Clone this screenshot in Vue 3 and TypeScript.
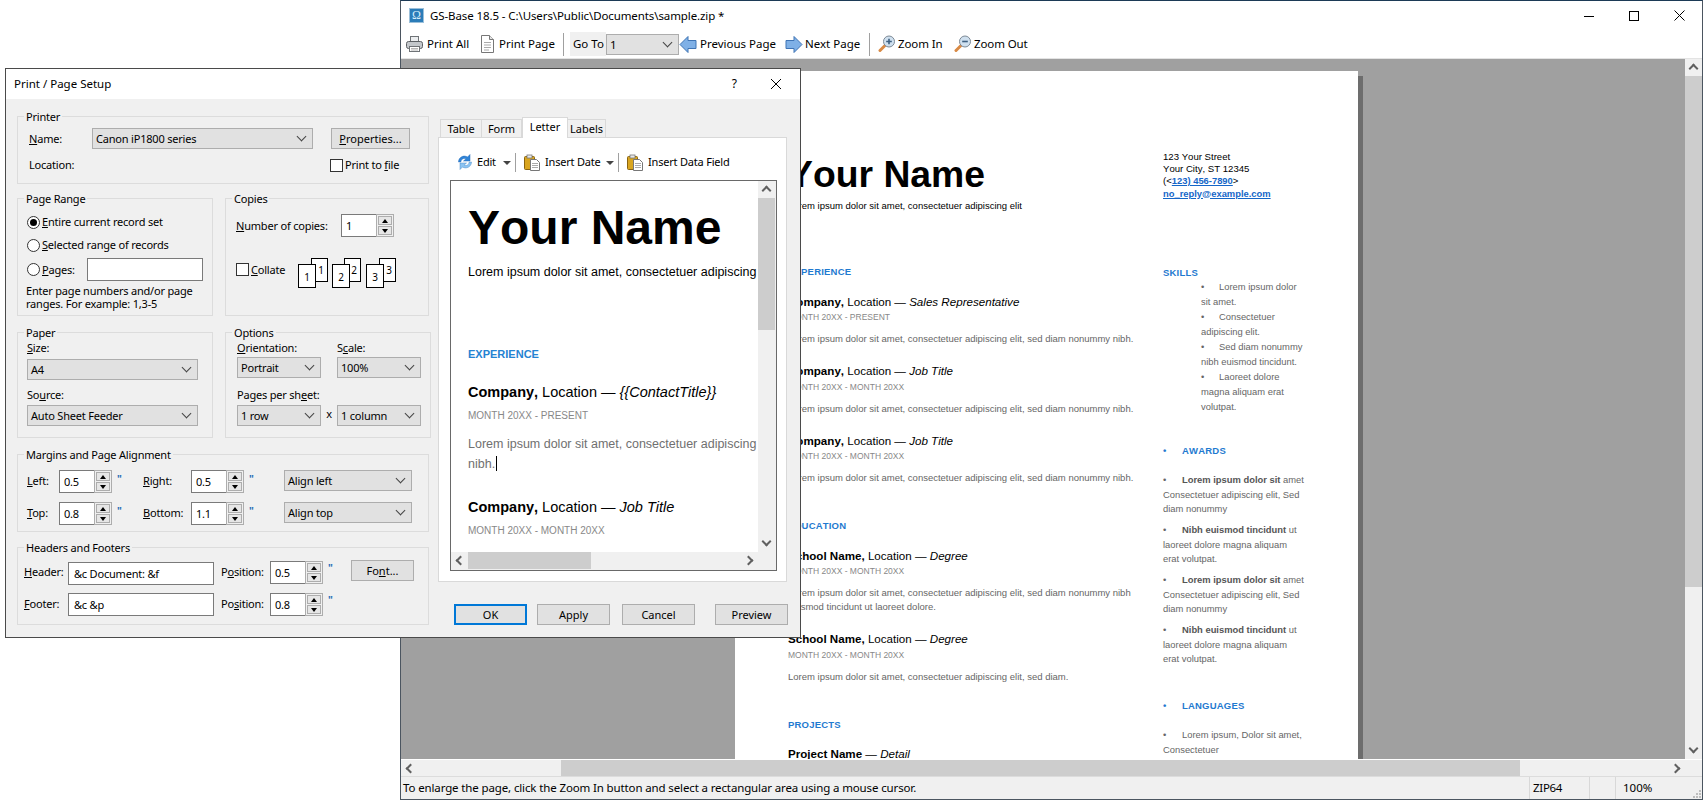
<script setup lang="ts">
interface Entry {
  name: string
  place: string
  role: string
  date: string
  body: string[]
}

const lorem = 'Lorem ipsum dolor sit amet, consectetuer adipiscing elit, sed diam nonummy nibh.'
const contactField = '{' + '{ContactTitle}' + '}'

const experience: Entry[] = [
  { name: 'Company,', place: 'Location —', role: 'Sales Representative', date: 'MONTH 20XX - PRESENT', body: [lorem] },
  { name: 'Company,', place: 'Location —', role: 'Job Title', date: 'MONTH 20XX - MONTH 20XX', body: [lorem] },
  { name: 'Company,', place: 'Location —', role: 'Job Title', date: 'MONTH 20XX - MONTH 20XX', body: [lorem] },
]

const education: Entry[] = [
  {
    name: 'School Name,',
    place: 'Location —',
    role: 'Degree',
    date: 'MONTH 20XX - MONTH 20XX',
    body: ['Lorem ipsum dolor sit amet, consectetuer adipiscing elit, sed diam nonummy nibh', 'euismod tincidunt ut laoreet dolore.'],
  },
  {
    name: 'School Name,',
    place: 'Location —',
    role: 'Degree',
    date: 'MONTH 20XX - MONTH 20XX',
    body: ['Lorem ipsum dolor sit amet, consectetuer adipiscing elit, sed diam.'],
  },
]

const skills = [
  ['Lorem ipsum dolor', 'sit amet.'],
  ['Consectetuer', 'adipiscing elit.'],
  ['Sed diam nonummy', 'nibh euismod tincidunt.'],
  ['Laoreet dolore', 'magna aliquam erat', 'volutpat.'],
]

const awards = [
  { bold: 'Lorem ipsum dolor sit', rest: 'amet', lines: ['Consectetuer adipiscing elit, Sed', 'diam nonummy'] },
  { bold: 'Nibh euismod tincidunt', rest: 'ut', lines: ['laoreet dolore magna aliquam', 'erat volutpat.'] },
  { bold: 'Lorem ipsum dolor sit', rest: 'amet', lines: ['Consectetuer adipiscing elit, Sed', 'diam nonummy'] },
  { bold: 'Nibh euismod tincidunt', rest: 'ut', lines: ['laoreet dolore magna aliquam', 'erat volutpat.'] },
]

const collatePages = [
  { x: 13, n: 1, fx: 0 },
  { x: 46, n: 2, fx: 34 },
  { x: 81, n: 3, fx: 68 },
]
</script>

<template>
  <div class="desktop">
    <!-- main preview window -->
    <div class="window">
      <div class="titlebar">
        <span class="app-icon">Ω</span>
        <span class="title-text">GS-Base 18.5 - C:\Users\Public\Documents\sample.zip *</span>
        <span class="win-btns">
          <svg width="10" height="10" viewBox="0 0 10 10"><path d="M0 5.5h10" stroke="#000" fill="none" /></svg>
          <svg width="10" height="10" viewBox="0 0 10 10"><rect x=".5" y=".5" width="9" height="9" stroke="#000" fill="none" /></svg>
          <svg width="11" height="11" viewBox="0 0 11 11"><path d="M.5.5l10 10M10.5.5l-10 10" stroke="#000" fill="none" /></svg>
        </span>
      </div>

      <div class="toolbar">
        <div class="tool tool-print-all">
          <svg width="17" height="17" viewBox="0 0 17 17">
            <rect x="4.5" y=".5" width="8" height="6" fill="#eceef0" stroke="#6f7377" />
            <rect x=".5" y="5.5" width="16" height="7" rx="2" fill="#c3c7cb" stroke="#5c6064" />
            <rect x="3.5" y="10.5" width="10" height="5" fill="#fff" stroke="#6f7377" />
            <path d="M5 12.5h7M5 14h7" stroke="#b5b5b5" />
          </svg>
          <span>Print All</span>
        </div>
        <div class="tool tool-print-page">
          <svg width="15" height="18" viewBox="0 0 15 18">
            <path d="M1.5.5h8l4 4v13h-12z" fill="#fff" stroke="#777" />
            <path d="M9.5.5v4h4" fill="#e4e4e4" stroke="#777" />
            <path d="M4 7.5h7M4 10h7M4 12.5h7M4 15h5" stroke="#aaa" />
          </svg>
          <span>Print Page</span>
        </div>
        <i class="tool-sep"></i>
        <div class="goto">Go To</div>
        <div class="select goto-select">1</div>
        <div class="tool tool-prev">
          <svg width="18" height="19" viewBox="0 0 18 19">
            <path d="M1 9.5L9 1.5v4h8v8H9v4z" fill="#7fb0e6" stroke="#3f74b5" />
          </svg>
          <span>Previous Page</span>
        </div>
        <div class="tool tool-next">
          <svg width="18" height="19" viewBox="0 0 18 19">
            <path d="M17 9.5L9 1.5v4H1v8h8v4z" fill="#7fb0e6" stroke="#3f74b5" />
          </svg>
          <span>Next Page</span>
        </div>
        <i class="tool-sep"></i>
        <div class="tool tool-zoom tool-zoomin">
          <svg width="18" height="18" viewBox="0 0 18 18">
            <path d="M7.5 10L2 15.5" stroke="#d98a45" stroke-width="3" stroke-linecap="round" />
            <circle cx="11" cy="6.5" r="5.5" fill="#cfe0ef" stroke="#7d8a96" />
            <path d="M8.2 6.5h5.600M11 3.700v5.600" stroke="#3d5f80" stroke-width="1.6" />
          </svg>
          <span>Zoom In</span>
        </div>
        <div class="tool tool-zoom">
          <svg width="18" height="18" viewBox="0 0 18 18">
            <path d="M7.5 10L2 15.5" stroke="#d98a45" stroke-width="3" stroke-linecap="round" />
            <circle cx="11" cy="6.5" r="5.5" fill="#cfe0ef" stroke="#7d8a96" />
            <path d="M8.2 6.5h5.600" stroke="#3d5f80" stroke-width="1.6" />
          </svg>
          <span>Zoom Out</span>
        </div>
      </div>

      <div class="workspace">
        <div class="canvas">
          <div class="page">
            <div class="page-main">
              <div class="cv-name">Your Name</div>
              <div class="cv-tag">Lorem ipsum dolor sit amet, consectetuer adipiscing elit</div>

              <div class="cv-section cv-first">EXPERIENCE</div>
              <div v-for="(e, i) in experience" :key="i" class="cv-entry">
                <div class="cv-head"><b>{{ e.name }}</b> {{ e.place }} <em>{{ e.role }}</em></div>
                <div class="cv-date">{{ e.date }}</div>
                <div class="cv-body">
                  <div v-for="line in e.body" :key="line">{{ line }}</div>
                </div>
              </div>

              <div class="cv-section">EDUCATION</div>
              <div v-for="(e, i) in education" :key="i" class="cv-entry">
                <div class="cv-head"><b>{{ e.name }}</b> {{ e.place }} <em>{{ e.role }}</em></div>
                <div class="cv-date">{{ e.date }}</div>
                <div class="cv-body">
                  <div v-for="line in e.body" :key="line">{{ line }}</div>
                </div>
              </div>

              <div class="cv-section">PROJECTS</div>
              <div class="cv-entry">
                <div class="cv-head"><b>Project Name</b> — <em>Detail</em></div>
              </div>
            </div>

            <div class="page-side">
              <div class="cv-contact">
                <div>123 Your Street</div>
                <div>Your City, ST 12345</div>
                <div>(&lt;<a>123) 456-7890</a>&gt;</div>
                <div class="cv-mail"><a>no_reply@example.com</a></div>
              </div>

              <div class="cv-section cv-skills">SKILLS</div>
              <div class="skill-list">
                <div v-for="(s, i) in skills" :key="i">
                  <div v-for="(line, j) in s" :key="line">
                    <span v-if="j === 0" class="bullet skill-bullet">•</span>{{ line }}
                  </div>
                </div>
              </div>

              <div class="cv-section cv-side-head"><span class="bullet side-bullet">•</span>AWARDS</div>
              <div class="award-list">
                <div v-for="(a, i) in awards" :key="i" class="award">
                  <div><span class="bullet side-bullet">•</span><b>{{ a.bold }}</b> {{ a.rest }}</div>
                  <div v-for="line in a.lines" :key="line">{{ line }}</div>
                </div>
              </div>

              <div class="cv-section cv-side-head cv-languages"><span class="bullet side-bullet">•</span>LANGUAGES</div>
              <div class="award-list">
                <div class="award">
                  <div><span class="bullet side-bullet">•</span>Lorem ipsum, Dolor sit amet,</div>
                  <div>Consectetuer</div>
                </div>
              </div>
            </div>
          </div>
        </div>
        <div class="vbar vbar-main">
          <span class="sb-btn"><i class="chev up"></i></span>
          <span class="vthumb vthumb-main"></span>
          <span class="sb-fill"></span>
          <span class="sb-btn"><i class="chev down"></i></span>
        </div>
      </div>

      <div class="hbar-row">
        <div class="hbar">
          <span class="sb-btn"><i class="chev left"></i></span>
          <span class="sb-gap"></span>
          <span class="hthumb-main"></span>
          <span class="sb-fill"></span>
          <span class="sb-btn"><i class="chev right"></i></span>
        </div>
        <span class="corner"></span>
      </div>

      <div class="statusbar">
        <span class="status-msg">To enlarge the page, click the Zoom In button and select a rectangular area using a mouse cursor.</span>
        <span class="status-cell cell-zip">ZIP64</span>
        <span class="status-cell cell-empty"></span>
        <span class="status-cell cell-zoom">100%</span>
        <svg class="grip" width="9" height="9" viewBox="0 0 9 9">
          <path d="M7 1h2v2H7zM4 4h2v2H4zM7 4h2v2H7zM1 7h2v2H1zM4 7h2v2H4zM7 7h2v2H7z" fill="#bdbdbd" />
        </svg>
      </div>
    </div>

    <!-- print setup dialog -->
    <div class="dialog">
      <div class="dlg-title">
        <span>Print / Page Setup</span>
        <span class="dlg-help">?</span>
        <svg class="dlg-close" width="12" height="12" viewBox="0 0 12 12"><path d="M1 1l10 10M11 1L1 11" stroke="#000" fill="none" /></svg>
      </div>

      <div class="dlg-body">
        <div class="dlg-left">
          <div class="group group-printer">
            <span class="legend">Printer</span>
            <div class="printer-row">
              <label class="printer-label"><u>N</u>ame:</label>
              <div class="select printer-select">Canon iP1800 series</div>
              <button class="btn btn-props"><u>P</u>roperties...</button>
            </div>
            <div class="printer-row location-row">
              <label class="location-label">Location:</label>
              <span class="check"></span>
              <span>Print to <u>f</u>ile</span>
            </div>
          </div>

          <div class="group-pair">
            <div class="group group-range">
              <span class="legend">Page Range</span>
              <div class="range-row"><span class="radio on"></span><span><u>E</u>ntire current record set</span></div>
              <div class="range-row"><span class="radio"></span><span><u>S</u>elected range of records</span></div>
              <div class="range-row pages-row">
                <span class="radio"></span><span><u>P</u>ages:</span>
                <span class="field pages-field"></span>
              </div>
              <p class="range-help">Enter page numbers and/or page<br />ranges. For example: 1,3-5</p>
            </div>

            <div class="group group-copies">
              <span class="legend">Copies</span>
              <div class="copies-row">
                <label class="copies-label"><u>N</u>umber of copies:</label>
                <div class="spin">
                  <span class="spin-field">1</span>
                  <span class="spin-btns"><i><b class="tri-up"></b></i><i><b class="tri-down"></b></i></span>
                </div>
              </div>
              <div class="collate-row">
                <span class="check"></span>
                <span class="collate-text"><u>C</u>ollate</span>
                <svg class="collate" width="98" height="30" viewBox="0 0 98 30">
                  <g v-for="p in collatePages" :key="p.n">
                    <rect :x="p.x + .5" y=".5" width="16" height="23" fill="#fff" stroke="#000" />
                    <text :x="p.x + 10" y="16" text-anchor="middle" class="collate-num">{{ p.n }}</text>
                    <rect :x="p.fx + .5" y="6.5" width="17" height="23" fill="#fff" stroke="#000" />
                    <text :x="p.fx + 9" y="23" text-anchor="middle" class="collate-num">{{ p.n }}</text>
                  </g>
                </svg>
              </div>
            </div>
          </div>

          <div class="group-pair pair-paper">
            <div class="group group-paper">
              <span class="legend">Paper</span>
              <label class="field-label"><u>S</u>ize:</label>
              <div class="select paper-select">A4</div>
              <label class="field-label source-label">So<u>u</u>rce:</label>
              <div class="select paper-select source-select">Auto Sheet Feeder</div>
            </div>
            <div class="group group-options">
              <span class="legend">Options</span>
              <div class="options-grid">
                <label class="field-label"><u>O</u>rientation:</label>
                <span></span>
                <label class="field-label">S<u>c</u>ale:</label>
                <div class="select">Portrait</div>
                <span></span>
                <div class="select">100%</div>
                <label class="field-label sheet-label">Pages per sh<u>e</u>et:</label>
                <span></span>
                <span></span>
                <div class="select">1 row</div>
                <span class="times">x</span>
                <div class="select">1 column</div>
              </div>
            </div>
          </div>

          <div class="group group-margins">
            <span class="legend">Margins and Page Alignment</span>
            <div class="margins-grid">
              <label><u>L</u>eft:</label>
              <div class="spin"><span class="spin-field">0.5</span><span class="spin-btns"><i><b class="tri-up"></b></i><i><b class="tri-down"></b></i></span></div>
              <span class="inch">"</span>
              <label><u>R</u>ight:</label>
              <div class="spin"><span class="spin-field">0.5</span><span class="spin-btns"><i><b class="tri-up"></b></i><i><b class="tri-down"></b></i></span></div>
              <span class="inch">"</span>
              <div class="select">Align left</div>

              <label><u>T</u>op:</label>
              <div class="spin"><span class="spin-field">0.8</span><span class="spin-btns"><i><b class="tri-up"></b></i><i><b class="tri-down"></b></i></span></div>
              <span class="inch">"</span>
              <label><u>B</u>ottom:</label>
              <div class="spin"><span class="spin-field">1.1</span><span class="spin-btns"><i><b class="tri-up"></b></i><i><b class="tri-down"></b></i></span></div>
              <span class="inch">"</span>
              <div class="select">Align top</div>
            </div>
          </div>

          <div class="group group-headers">
            <span class="legend">Headers and Footers</span>
            <div class="headers-grid">
              <label><u>H</u>eader:</label>
              <span class="field head-field">&amp;c Document: &amp;f</span>
              <label>P<u>o</u>sition:</label>
              <div class="spin"><span class="spin-field">0.5</span><span class="spin-btns"><i><b class="tri-up"></b></i><i><b class="tri-down"></b></i></span></div>
              <span class="inch">"</span>
              <button class="btn btn-font">Fo<u>n</u>t...</button>

              <label><u>F</u>ooter:</label>
              <span class="field">&amp;c &amp;p</span>
              <label>Po<u>s</u>ition:</label>
              <div class="spin"><span class="spin-field">0.8</span><span class="spin-btns"><i><b class="tri-up"></b></i><i><b class="tri-down"></b></i></span></div>
              <span class="inch">"</span>
              <span></span>
            </div>
          </div>
        </div>

        <div class="dlg-right">
          <div class="tabs">
            <span class="tab tab-table">Table</span>
            <span class="tab tab-form">Form</span>
            <span class="tab tab-letter">Letter</span>
            <span class="tab tab-labels">Labels</span>
          </div>
          <div class="panel">
            <div class="panel-tools">
              <svg class="pt-edit" width="16" height="16" viewBox="0 0 16 16">
                <path d="M1.5 8C1.5 3.5 6.5 .5 10.5 3L13 .5V7H6.5L9 4.800C6.500 3.800 4.200 5 3.800 8z" fill="#2f84d8" stroke="#2a6fb8" stroke-width=".5" />
                <path d="M14.5 8C14.5 12.5 9.5 15.5 5.5 13L3 15.500V9h6.500L7 11.200c2.500 1 4.800-.2 5.200-3.200z" fill="#8cc4f2" stroke="#4f8fcb" stroke-width=".5" />
              </svg>
              <span class="pt-text pt-edit-text">Edit</span>
              <b class="tb-drop"></b>
              <i class="pt-sep"></i>
              <svg class="pt-icon" width="17" height="17" viewBox="0 0 17 17">
                <rect x=".5" y="2.5" width="10" height="13" rx="1" fill="#d9a51f" stroke="#8a6410" />
                <rect x="3" y="1" width="5" height="3" fill="#e9e9e9" stroke="#777" stroke-width=".8" />
                <path d="M6.5 5.5h6l3 3v8h-9z" fill="#fff" stroke="#777" />
                <path d="M8 9.5h6M8 11.5h6M8 13.5h6" stroke="#aaa" />
              </svg>
              <span class="pt-text pt-date-text">Insert Date</span>
              <b class="tb-drop"></b>
              <i class="pt-sep"></i>
              <svg class="pt-icon" width="17" height="17" viewBox="0 0 17 17">
                <rect x=".5" y="2.5" width="10" height="13" rx="1" fill="#d9a51f" stroke="#8a6410" />
                <rect x="3" y="1" width="5" height="3" fill="#e9e9e9" stroke="#777" stroke-width=".8" />
                <path d="M6.5 5.5h6l3 3v8h-9z" fill="#fff" stroke="#777" />
                <path d="M8 9.5h6M8 11.5h6M8 13.5h6" stroke="#aaa" />
              </svg>
              <span class="pt-text">Insert Data Field</span>
            </div>

            <div class="editor">
              <div class="editor-view">
                <div class="ed-name">Your Name</div>
                <div class="ed-tag">Lorem ipsum dolor sit amet, consectetuer adipiscing elit</div>
                <div class="ed-section">EXPERIENCE</div>
                <div class="ed-head"><b>Company,</b> Location — <em>{{ contactField }}</em></div>
                <div class="ed-date">MONTH 20XX - PRESENT</div>
                <div class="ed-body">Lorem ipsum dolor sit amet, consectetuer adipiscing elit, sed diam nonummy</div>
                <div class="ed-line2">nibh.<span class="caret"></span></div>
                <div class="ed-head ed-head2"><b>Company,</b> Location — <em>Job Title</em></div>
                <div class="ed-date">MONTH 20XX - MONTH 20XX</div>
              </div>
              <div class="vbar">
                <span class="sb-btn"><i class="chev up"></i></span>
                <span class="vthumb vthumb-ed"></span>
                <span class="sb-fill"></span>
                <span class="sb-btn"><i class="chev down"></i></span>
              </div>
              <div class="hbar">
                <span class="sb-btn"><i class="chev left"></i></span>
                <span class="hthumb-ed"></span>
                <span class="sb-fill"></span>
                <span class="sb-btn"><i class="chev right"></i></span>
              </div>
              <span class="corner"></span>
            </div>
          </div>
          <div class="dlg-buttons">
            <button class="btn btn-ok">OK</button>
            <button class="btn btn-apply">Apply</button>
            <button class="btn btn-cancel">Cancel</button>
            <button class="btn btn-preview">Preview</button>
          </div>
        </div>
      </div>
    </div>
  </div>
</template>

<style>
html,
body {
  margin: 0;
  background: #fff;
  overflow: hidden;
}
</style>

<style scoped>
.desktop {
  position: relative;
  width: 1703px;
  height: 800px;
  overflow: hidden;
  background: #fff;
  color: #000;
  font-family: "Noto Sans", "Open Sans", sans-serif;
  font-size: 11.5px;
  line-height: 16px;
}

/* ---------- main window ---------- */
.window {
  position: absolute;
  left: 400px;
  top: 0;
  width: 1303px;
  height: 800px;
  box-sizing: border-box;
  display: flex;
  flex-direction: column;
  border: 1px solid #4b5560;
  border-top-color: #1c3a56;
  background: #fff;
}

.titlebar {
  height: 29px;
  flex: none;
  display: flex;
  align-items: center;
  padding-left: 8px;
}

.title-text {
  letter-spacing: -0.1px;
}

.app-icon {
  width: 15px;
  height: 15px;
  margin-right: 6px;
  background: #2b7cb8;
  border: 1px solid #9cc0da;
  box-sizing: border-box;
  color: #d5ecfa;
  font: 12px/13px "Liberation Serif", serif;
  text-align: center;
}

.win-btns {
  margin-left: auto;
  display: flex;
  align-items: center;
  gap: 35px;
  padding-right: 17px;
}

.toolbar {
  height: 29px;
  flex: none;
  display: flex;
  align-items: center;
  padding-left: 5px;
  box-sizing: border-box;
  border-bottom: 1px solid #e3e3e3;
}

.tool {
  display: flex;
  align-items: center;
  gap: 4px;
}

.tool-print-all {
  width: 74px;
}

.tool-print-page {
  width: 83px;
}

.tool-sep {
  width: 1px;
  height: 23px;
  background: #a0a0a0;
  margin-right: 6px;
}

.goto {
  width: 36px;
  height: 24px;
  box-sizing: border-box;
  padding-left: 3px;
  background: #f0f0f0;
  line-height: 24px;
}

.goto-select {
  width: 73px;
  height: 23px;
  line-height: 21px;
  padding-left: 3px;
}

.tool-prev {
  width: 106px;
  gap: 3px;
}

.tool-next {
  width: 84px;
  gap: 2px;
}

.tool-zoom {
  gap: 2px;
  letter-spacing: -0.1px;
}

.tool-zoomin {
  width: 76px;
  margin-left: 2px;
}

.workspace {
  flex: 1;
  min-height: 0;
  display: flex;
  border-bottom: 1px solid #fff;
}

.canvas {
  flex: 1;
  min-width: 0;
  overflow: hidden;
  background: #a0a0a0;
  padding: 12px 0 0 334px;
}

/* ---------- resume page ---------- */
.page {
  width: 623px;
  height: 800px;
  box-sizing: border-box;
  background: #fff;
  box-shadow: 5px 5px 0 #6d6d6d;
  display: flex;
  padding-left: 53px;
  font-family: "Liberation Sans", Arial, sans-serif;
  font-kerning: none;
  color: #000;
}

.page-main {
  width: 375px;
  flex: none;
  padding-top: 82px;
  white-space: nowrap;
}

.cv-name {
  font-size: 37.33px;
  line-height: 42px;
  font-weight: 700;
}

.cv-tag {
  font-size: 9.5px;
  line-height: 14px;
  margin-top: 4px;
}

.cv-section {
  font-size: 9.5px;
  line-height: 14px;
  font-weight: 700;
  color: #1f7ad0;
  letter-spacing: 0.2px;
  margin-top: 34px;
}

.cv-first {
  margin-top: 52px;
}

.cv-entry {
  margin-top: 17px;
}

.cv-section + .cv-entry {
  margin-top: 14.5px;
}

.cv-head {
  font-size: 11.6px;
  line-height: 16px;
}

.cv-date {
  font-size: 8.5px;
  line-height: 12px;
  color: #888;
  margin-top: 1.5px;
}

.cv-body {
  font-size: 9.5px;
  line-height: 14px;
  color: #666;
  margin-top: 9px;
}

.page-side {
  flex: 1;
  padding-top: 79.5px;
  white-space: nowrap;
}

.cv-contact {
  font-size: 9.6px;
  line-height: 12px;
}

.cv-contact a {
  color: #1466c8;
  font-size: 9.4px;
  font-weight: 700;
  text-decoration: underline;
}

.cv-mail {
  margin-top: 1px;
}

.cv-skills {
  margin-top: 66px;
}

.skill-list {
  margin: -1px 0 0 38px;
  font-size: 9.4px;
  line-height: 15px;
  color: #666;
}

.bullet {
  display: inline-block;
}

.skill-bullet {
  width: 18px;
}

.side-bullet {
  width: 19px;
}

.cv-side-head {
  margin-top: 30.5px;
}

.cv-languages {
  margin-top: 32.5px;
}

.award-list {
  margin-top: 15px;
  font-size: 9.4px;
  line-height: 14.5px;
  color: #666;
}

.award {
  margin-bottom: 6.5px;
}

.award b {
  color: #555;
}

/* ---------- scroll bars ---------- */
.vbar {
  grid-area: vbar;
  width: 17px;
  flex: none;
  display: flex;
  flex-direction: column;
  background: #f0f0f0;
}

.hbar {
  grid-area: hbar;
  height: 17px;
  display: flex;
  background: #f0f0f0;
}

.sb-btn {
  width: 17px;
  height: 17px;
  flex: none;
  display: flex;
  align-items: center;
  justify-content: center;
}

.sb-fill {
  flex: 1;
}

.sb-gap {
  width: 143px;
}

.vthumb {
  background: #cdcdcd;
  flex: none;
}

.vthumb-main {
  height: 511px;
}

.vthumb-ed {
  height: 132px;
}

.hthumb-main,
.hthumb-ed {
  background: #cdcdcd;
  flex: none;
}

.hthumb-main {
  width: 959px;
}

.hthumb-ed {
  width: 123px;
}

.chev {
  width: 5px;
  height: 5px;
  border: solid #606060;
  border-width: 2px 2px 0 0;
  display: block;
}

.chev.up {
  transform: translateY(1px) rotate(-45deg);
}

.chev.down {
  transform: translateY(-2px) rotate(135deg);
}

.chev.left {
  transform: translateX(1px) rotate(-135deg);
}

.chev.right {
  transform: translateX(-1px) rotate(45deg);
}

.corner {
  grid-area: corner;
  width: 17px;
  flex: none;
  background: #f0f0f0;
}

.hbar-row {
  flex: none;
  height: 16px;
  display: flex;
}

.hbar-row .hbar {
  flex: 1;
  height: 16px;
}

.hbar-row .sb-btn {
  height: 16px;
}

/* ---------- status bar ---------- */
.statusbar {
  flex: none;
  height: 23px;
  box-sizing: border-box;
  position: relative;
  display: flex;
  align-items: center;
  background: #f0f0f0;
  border-top: 1px solid #dcdcdc;
  padding-left: 2px;
}

.status-msg {
  width: 1126px;
  flex: none;
  white-space: nowrap;
  letter-spacing: -0.13px;
}

.status-cell {
  align-self: stretch;
  border-left: 1px solid #d8d8d8;
  box-sizing: border-box;
  line-height: 22px;
  padding-left: 3px;
  flex: none;
}

.cell-zip {
  width: 60px;
  letter-spacing: -0.3px;
}

.cell-empty {
  width: 26px;
}

.cell-zoom {
  padding-left: 7px;
}

.grip {
  position: absolute;
  right: 1px;
  bottom: 1px;
}

/* ---------- dialog ---------- */
.dialog {
  position: absolute;
  left: 5px;
  top: 68px;
  width: 796px;
  height: 570px;
  box-sizing: border-box;
  border: 1px solid #4a4a4a;
  background: #f0f0f0;
  display: flex;
  flex-direction: column;
}

.dlg-title {
  height: 30px;
  flex: none;
  background: #fff;
  display: flex;
  align-items: center;
  padding-left: 8px;
  font-size: 11.5px;
}

.dlg-help {
  margin-left: auto;
  font-size: 12px;
  margin-right: 33px;
}

.dlg-close {
  margin-right: 18px;
}

.dlg-body {
  flex: 1;
  display: flex;
  min-height: 0;
  font-size: 11px;
  letter-spacing: -0.2px;
}

.dlg-left {
  width: 432px;
  flex: none;
  box-sizing: border-box;
  padding: 17px 0 0 11px;
  white-space: nowrap;
}

.group {
  position: relative;
  box-sizing: border-box;
  border: 1px solid #dcdcdc;
}

.legend {
  position: absolute;
  top: -8px;
  left: 6px;
  padding: 0 2px;
  background: #f0f0f0;
}

label {
  display: block;
}

.group-printer {
  width: 412px;
  height: 68px;
  padding: 11px 0 0 11px;
}

.printer-row {
  display: flex;
  align-items: center;
}

.printer-label {
  width: 63px;
}

.printer-select {
  width: 221px;
}

.btn-props {
  width: 79px;
  margin-left: 18px;
}

.location-row {
  margin-top: 8px;
  height: 16px;
}

.location-label {
  width: 301px;
}

.location-row .check {
  margin-right: 2px;
}

.group-pair {
  display: flex;
  margin-top: 14px;
  gap: 12px;
}

.pair-paper {
  margin-top: 16px;
}

.group-range {
  width: 196px;
  height: 118px;
  padding: 13px 0 0 9px;
}

.range-row {
  display: flex;
  align-items: center;
  gap: 2px;
  height: 20px;
  width: 176px;
  margin-bottom: 3px;
}

.pages-row {
  height: 23px;
}

.pages-field {
  width: 116px;
  margin-left: auto;
}

.range-help {
  margin: 3px 0 0 -1px;
  line-height: 13px;
}

.group-copies {
  width: 204px;
  height: 118px;
  padding: 15px 0 0 10px;
}

.copies-row {
  display: flex;
  align-items: center;
}

.copies-label {
  width: 105px;
}

.collate-row {
  display: flex;
  align-items: flex-start;
  margin-top: 21px;
  height: 30px;
}

.collate-row .check {
  margin-top: 5px;
}

.collate-text {
  margin: 4px 0 0 2px;
  width: 47px;
}

.collate-num {
  font-size: 10px;
  font-family: "Noto Sans", sans-serif;
}

.check {
  width: 13px;
  height: 13px;
  box-sizing: border-box;
  border: 1px solid #333;
  background: #fff;
  flex: none;
}

.radio {
  width: 13px;
  height: 13px;
  box-sizing: border-box;
  border: 1px solid #333;
  border-radius: 50%;
  background: #fff;
  flex: none;
  display: flex;
  align-items: center;
  justify-content: center;
}

.radio.on::after {
  content: "";
  width: 7px;
  height: 7px;
  border-radius: 50%;
  background: #000;
}

.field {
  box-sizing: border-box;
  height: 23px;
  border: 1px solid #7a7a7a;
  background: #fff;
  line-height: 21px;
  padding-left: 5px;
}

.select {
  position: relative;
  box-sizing: border-box;
  height: 21px;
  border: 1px solid #adadad;
  background: #e1e1e1;
  line-height: 19px;
  padding-left: 3px;
}

.select::after {
  content: "";
  position: absolute;
  right: 7px;
  top: 4px;
  width: 6px;
  height: 6px;
  border: solid #444;
  border-width: 0 1px 1px 0;
  transform: rotate(45deg);
}

.btn {
  box-sizing: border-box;
  height: 21px;
  border: 1px solid #adadad;
  background: #e1e1e1;
  font: inherit;
  letter-spacing: 0;
  line-height: 19px;
  padding: 0;
  color: #000;
  text-align: center;
  white-space: nowrap;
}

.spin {
  display: flex;
  width: 53px;
  height: 23px;
  box-sizing: border-box;
}

.spin-field {
  flex: 1;
  box-sizing: border-box;
  border: 1px solid #7a7a7a;
  border-right: 0;
  background: #fff;
  line-height: 21px;
  padding-left: 4px;
}

.spin-btns {
  width: 18px;
  flex: none;
  box-sizing: border-box;
  border: 1px solid #adadad;
  background: #f0f0f0;
  padding: 1px;
  display: flex;
  flex-direction: column;
  gap: 1px;
}

.spin-btns i {
  flex: 1;
  border: 1px solid #adadad;
  background: #e6e6e6;
  display: flex;
  align-items: center;
  justify-content: center;
}

.tri-up,
.tri-down {
  width: 0;
  height: 0;
  border-left: 3.5px solid transparent;
  border-right: 3.5px solid transparent;
}

.tri-up {
  border-bottom: 4px solid #000;
}

.tri-down {
  border-top: 4px solid #000;
}

.inch {
  color: #2a6fb8;
  font-weight: 700;
  font-size: 10px;
  line-height: 12px;
  padding: 3px 0 0 5px;
}

.headers-grid .inch {
  padding-top: 1px;
}

.group-paper {
  width: 196px;
  height: 106px;
  padding: 7px 9px 0;
}

.field-label {
  height: 16px;
}

.paper-select {
  width: 171px;
  margin-top: 3px;
}

.source-label {
  margin-top: 7px;
}

.source-select {
  margin-top: 2px;
}

.group-options {
  width: 206px;
  height: 106px;
  padding: 7px 0 0 11px;
}

.options-grid {
  display: grid;
  grid-template-columns: 84px 16px 84px;
  grid-template-rows: 16px 21px 16px 21px;
}

.options-grid > .select:nth-child(4),
.options-grid > .select:nth-child(6) {
  margin-top: 1px;
}

.sheet-label {
  margin-top: 10px;
  width: 90px;
}

.options-grid > .select:nth-child(10),
.options-grid > .select:nth-child(12) {
  margin-top: 12px;
}

.times {
  margin-top: 13px;
  text-align: center;
}

.group-margins {
  width: 412px;
  height: 78px;
  margin-top: 16px;
  padding: 15px 0 0 9px;
}

.margins-grid {
  display: grid;
  grid-template-columns: 32px 53px 31px 48px 53px 40px 128px;
  grid-auto-rows: 23px;
  row-gap: 9px;
  align-items: start;
}

.margins-grid label {
  line-height: 21px;
}

.group-headers {
  width: 412px;
  height: 78px;
  margin-top: 15px;
  padding: 13px 0 0 6px;
}

.headers-grid {
  display: grid;
  grid-template-columns: 44px 146px 7px 49px 53px 28px 63px;
  column-gap: 0;
  row-gap: 8px;
  grid-auto-rows: minmax(23px, auto);
  align-items: start;
}

.headers-grid .field {
  grid-column: 2;
}

.headers-grid label:nth-of-type(even) {
  grid-column: 4;
}

.headers-grid label {
  line-height: 21px;
}

.head-field {
  margin-top: 1px;
}

.btn-font {
  width: 63px;
  margin-top: -1px;
}

.dlg-right {
  width: 350px;
  flex: none;
  padding-top: 18px;
}

.tabs {
  display: flex;
  height: 20px;
  padding-left: 2px;
  align-items: flex-end;
  position: relative;
  z-index: 1;
  letter-spacing: 0;
}

.tab {
  box-sizing: border-box;
  height: 18px;
  border: 1px solid #d9d9d9;
  border-bottom: 0;
  border-left-width: 0;
  background: #f0f0f0;
  text-align: center;
  line-height: 18px;
}

.tab-table {
  width: 42px;
  border-left-width: 1px;
}

.tab-form {
  width: 40px;
}

.tab-letter {
  width: 46px;
  height: 21px;
  margin-bottom: -1px;
  background: #fff;
  border-left-width: 1px;
  line-height: 17px;
}

.tab-labels {
  width: 38px;
}

.panel {
  box-sizing: border-box;
  width: 349px;
  height: 445px;
  border: 1px solid #d9d9d9;
  background: #fff;
  padding: 0 0 0 11px;
}

.panel-tools {
  height: 42px;
  box-sizing: border-box;
  padding: 6px 0 0 7px;
  display: flex;
  align-items: center;
  white-space: nowrap;
}

.pt-text {
  margin-left: 4px;
}

.pt-edit-text {
  width: 22px;
}

.pt-date-text {
  width: 57px;
}

.tb-drop {
  width: 0;
  height: 0;
  border-left: 4px solid transparent;
  border-right: 4px solid transparent;
  border-top: 4px solid #444;
  margin: 1px 4px 0 4px;
}

.pt-sep {
  width: 1px;
  height: 19px;
  background: #a0a0a0;
  margin-right: 8px;
}

.editor {
  box-sizing: border-box;
  width: 327px;
  height: 391px;
  border: 1px solid #696969;
  display: grid;
  grid-template-columns: 307px 18px;
  grid-template-rows: 371px 18px;
  grid-template-areas: "view vbar" "hbar corner";
  background: #f0f0f0;
  letter-spacing: 0;
}

.editor-view {
  grid-area: view;
  overflow: hidden;
  background: #fff;
  white-space: nowrap;
  padding: 20px 0 0 17px;
  font-family: "Liberation Sans", Arial, sans-serif;
  font-kerning: none;
}

.ed-name {
  font-size: 48px;
  line-height: 54px;
  font-weight: 700;
}

.ed-tag {
  font-size: 12.5px;
  line-height: 20px;
  margin-top: 7px;
}

.ed-section {
  font-size: 11px;
  line-height: 16px;
  font-weight: 700;
  color: #2583d2;
  margin-top: 64px;
}

.ed-head {
  font-size: 14.5px;
  line-height: 20px;
  margin-top: 20px;
}

.ed-head2 {
  margin-top: 23px;
}

.ed-date {
  font-size: 10px;
  line-height: 14px;
  color: #888;
  margin-top: 7px;
}

.ed-body,
.ed-line2 {
  font-size: 12.5px;
  line-height: 20px;
  color: #707070;
}

.ed-body {
  margin-top: 11px;
}

.caret {
  display: inline-block;
  width: 1px;
  height: 15px;
  background: #000;
  vertical-align: -3px;
  margin-left: 1px;
}

.dlg-buttons {
  display: flex;
  margin-top: 22px;
  padding-left: 16px;
}

.dlg-buttons .btn {
  width: 73px;
}

.btn-ok {
  border: 2px solid #0078d7 !important;
  line-height: 17px !important;
}

.btn-apply {
  margin-left: 10px;
}

.btn-cancel {
  margin-left: 12px;
}

.btn-preview {
  margin-left: 20px;
}
</style>
